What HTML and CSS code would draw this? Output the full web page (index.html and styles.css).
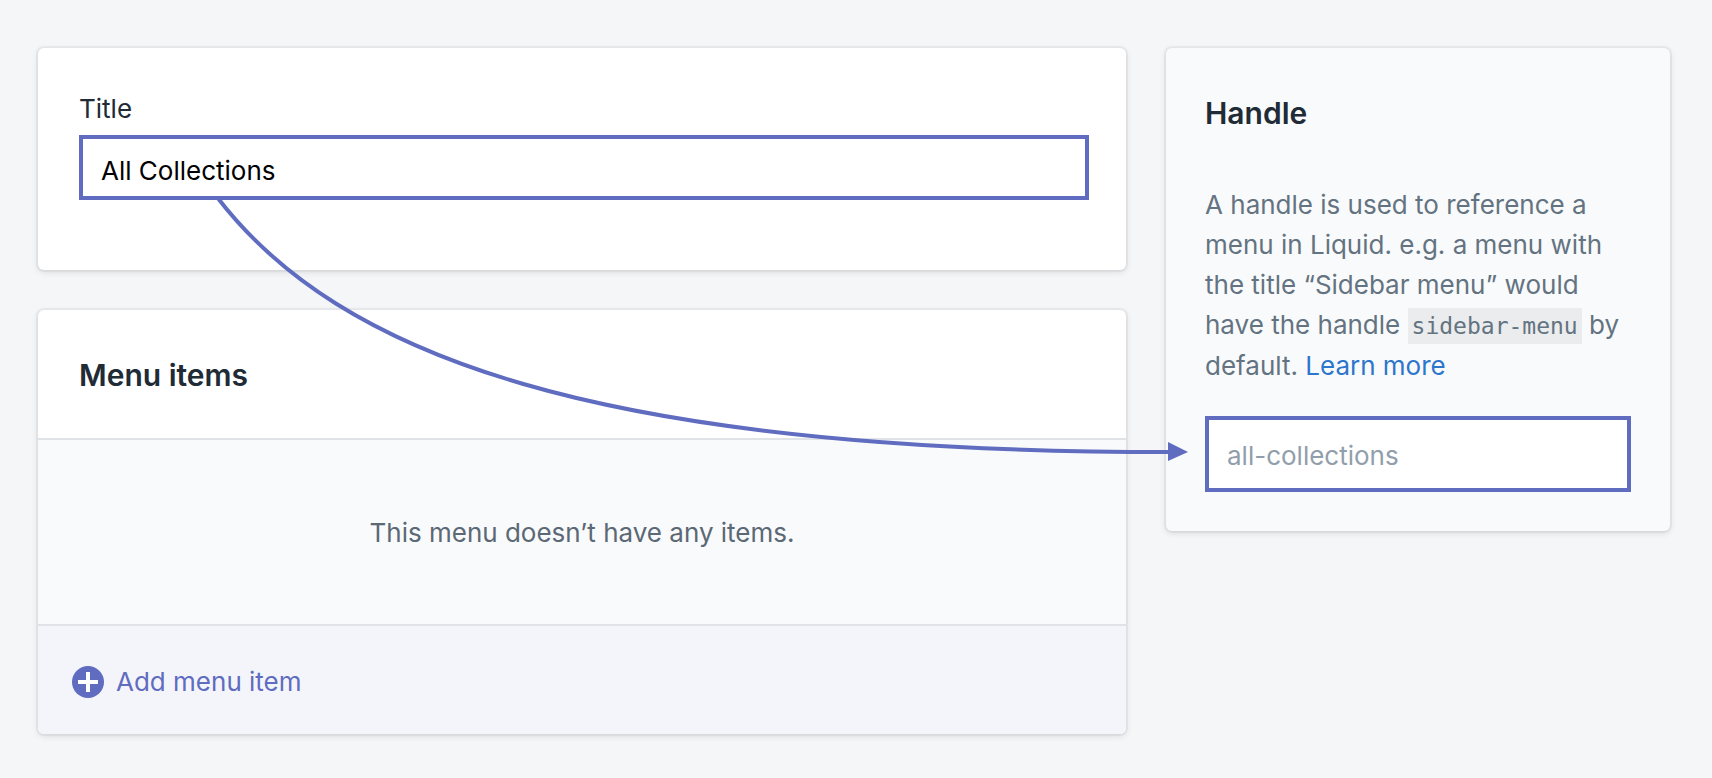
FILE: index.html
```html
<!DOCTYPE html>
<html lang="en">

<head>
    <meta charset="UTF-8">
    <meta name="viewport" content="width=device-width, initial-scale=1.0">
    <title>Add menu</title>
    <link rel="stylesheet" href="styles.css">
</head>

<body>
    <div class="page">
        <main class="main">
            <section class="card title-card">
                <label for="title">Title</label>
                <input type="text" id="title" class="field" value="All Collections">
            </section>

            <section class="card">
                <div class="card-header">
                    <h2>Menu items</h2>
                </div>
                <p class="empty">This menu doesn’t have any items.</p>
                <div class="card-footer">
                    <button type="button" class="add">
                        <svg width="32" height="32" viewBox="0 0 32 32" aria-hidden="true">
                            <circle cx="16" cy="16" r="16" fill="#5f6cbf" />
                            <path d="M6 16h20M16 6v20" stroke="#fff" stroke-width="4" />
                        </svg>
                        Add menu item
                    </button>
                </div>
            </section>
        </main>

        <aside class="card handle-card">
            <h2><label for="handle">Handle</label></h2>
            <p class="help">A handle is used to reference a menu in Liquid. e.g. a menu with the title “Sidebar menu” would have the handle <code>sidebar-menu</code> by default. <a href="#">Learn more</a></p>
            <input type="text" id="handle" class="field field-handle" placeholder="all-collections">
        </aside>

        <!-- arrow from the title field to the handle field -->
        <svg class="arrow" width="980" height="272" viewBox="0 0 980 272" aria-hidden="true">
            <path d="M7 7C128 165 383 262 960 262" fill="none" stroke="#5f6cbf" stroke-width="4" />
            <path d="M958 252L978 262L958 271Z" fill="#5f6cbf" />
        </svg>
    </div>
</body>

</html>
```

FILE: styles.css
```css
* {
    margin: 0;
    padding: 0;
    box-sizing: border-box;
}

body {
    background-color: #f4f6f8;
    color: #212b36;
    font-family: Inter, "Liberation Sans", sans-serif;
    font-size: 26px;
    line-height: 40px;
}

h2 {
    font-size: 30px;
    font-weight: 600;
    line-height: 40px;
}

.page {
    position: relative;
    display: grid;
    grid-template-columns: 136fr 63fr;
    align-items: start;
    gap: 40px;
    padding: 48px 42px 44px 38px;
}

.main {
    display: grid;
    gap: 40px;
}

.card {
    background-color: #fff;
    border-radius: 6px;
    box-shadow: 0 0 0 2px rgba(63, 63, 68, .05), 0 2px 6px rgba(63, 63, 68, .15);
    overflow: hidden;
}

.title-card {
    padding: 41px 37px 70px 41px;
}

.title-card label {
    display: block;
    margin-bottom: 6px;
}

.field {
    display: block;
    width: 100%;
    height: 65px;
    padding: 5px 18px 0;
    background-color: #fff;
    border: 4px solid #5f6cbf;
    color: #000;
    font: inherit;
    outline: none;
}

.field::placeholder {
    color: #919eab;
    opacity: 1;
}

.card-header {
    padding: 45px 41px 43px;
}

.empty {
    padding: 73px 40px 71px;
    background-color: #f9fafb;
    border-top: 2px solid #dfe3e8;
    border-bottom: 2px solid #dfe3e8;
    color: #5b6875;
    text-align: center;
}

.card-footer {
    padding: 36px 34px 32px;
    background-color: #f4f5fa;
}

.add {
    display: flex;
    align-items: center;
    gap: 12px;
    background: none;
    border: none;
    color: #5f6cbf;
    font: inherit;
    cursor: pointer;
}

.handle-card {
    padding: 45px 39px 39px;
    background-color: #f9fafb;
}

.help {
    margin: 52px 0 30px;
    color: #637381;
}

.help code {
    padding: 5px 4px;
    background-color: #ebeced;
    font-family: "DejaVu Sans Mono", monospace;
    font-size: 23px;
}

.help a {
    color: #2c76cb;
    text-decoration: none;
}

.field-handle {
    height: 76px;
    padding-top: 2px;
}

.arrow {
    position: absolute;
    top: 190px;
    left: 210px;
    pointer-events: none;
}
```
